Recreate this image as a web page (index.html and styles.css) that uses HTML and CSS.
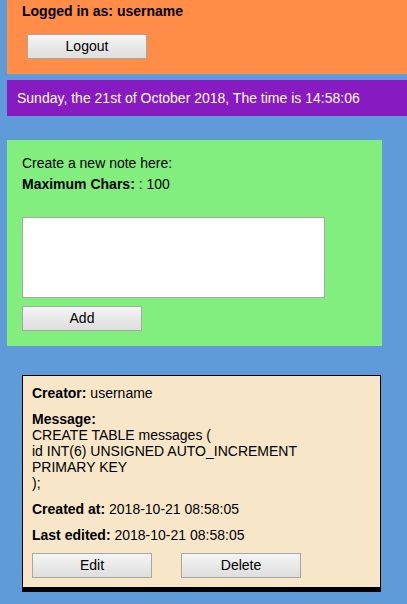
FILE: index.html
```html
<!DOCTYPE html>
<html>
<head>
<meta charset="utf-8">
<link rel="stylesheet" href="styles.css">
</head>
<body>
<div class="header">
  <div class="login">Logged in as: username</div>
  <button class="btn logout">Logout</button>
</div>
<div class="datebar">Sunday, the 21st of October 2018, The time is 14:58:06</div>
<div class="create">
  <div class="line1">Create a new note here:</div>
  <div class="line2"><b>Maximum Chars:</b> : 100</div>
  <textarea class="note-input"></textarea>
  <button class="btn add">Add</button>
</div>
<div class="card">
  <div class="row"><b>Creator:</b> username</div>
  <div class="row"><b>Message:</b><br>CREATE TABLE messages (<br>id INT(6) UNSIGNED AUTO_INCREMENT<br>PRIMARY KEY<br>);</div>
  <div class="row"><b>Created at:</b> 2018-10-21 08:58:05</div>
  <div class="row"><b>Last edited:</b> 2018-10-21 08:58:05</div>
  <div class="actions">
    <button class="btn">Edit</button>
    <button class="btn">Delete</button>
  </div>
</div>
</body>
</html>
```
FILE: styles.css
```css
html, body {
  margin: 0;
  padding: 0;
}
body {
  background: #5f9bd8;
  font-family: "Liberation Sans", Arial, sans-serif;
  font-size: 14px;
  line-height: 16px;
  color: #000;
  padding-left: 7px;
  height: 604px;
  overflow: hidden;
}
.header {
  background: #ff8c47;
  height: 74px;
  padding-left: 15px;
  box-sizing: border-box;
  padding-top: 3px;
}
.login {
  font-weight: bold;
}
.btn {
  width: 120px;
  height: 25px;
  box-sizing: border-box;
  border: 1px solid #a6a6a6;
  border-radius: 0;
  background: linear-gradient(#f4f4f4, #dedede);
  font-family: "Liberation Sans", Arial, sans-serif;
  font-size: 14px;
  color: #000;
  padding: 0 0 2px 0;
  margin: 0;
  display: block;
}
.logout {
  margin-top: 15px;
  margin-left: 5px;
}
.datebar {
  margin-top: 6px;
  background: #871ac1;
  color: #fff;
  height: 36px;
  box-sizing: border-box;
  padding: 10px 10px;
}
.create {
  margin-top: 24px;
  width: 375px;
  height: 206px;
  box-sizing: border-box;
  background: #82ee7e;
  padding: 15px 15px;
}
.line2 {
  margin-top: 5px;
}
.note-input {
  display: block;
  margin: 25px 0 0 0;
  width: 303px;
  height: 81px;
  box-sizing: border-box;
  border: 1px solid #a9a9a9;
  background: #fff;
  resize: none;
  padding: 2px;
}
.add {
  margin-top: 8px;
}
.card {
  margin-top: 29px;
  margin-left: 15px;
  width: 359px;
  box-sizing: border-box;
  background: #f7e6c8;
  border: 1px solid #000;
  border-bottom: 5px solid #000;
  padding: 9px 9px 9px 9px;
}
.row + .row {
  margin-top: 10px;
}
.actions {
  margin-top: 10px;
  display: flex;
  gap: 29px;
}
```
